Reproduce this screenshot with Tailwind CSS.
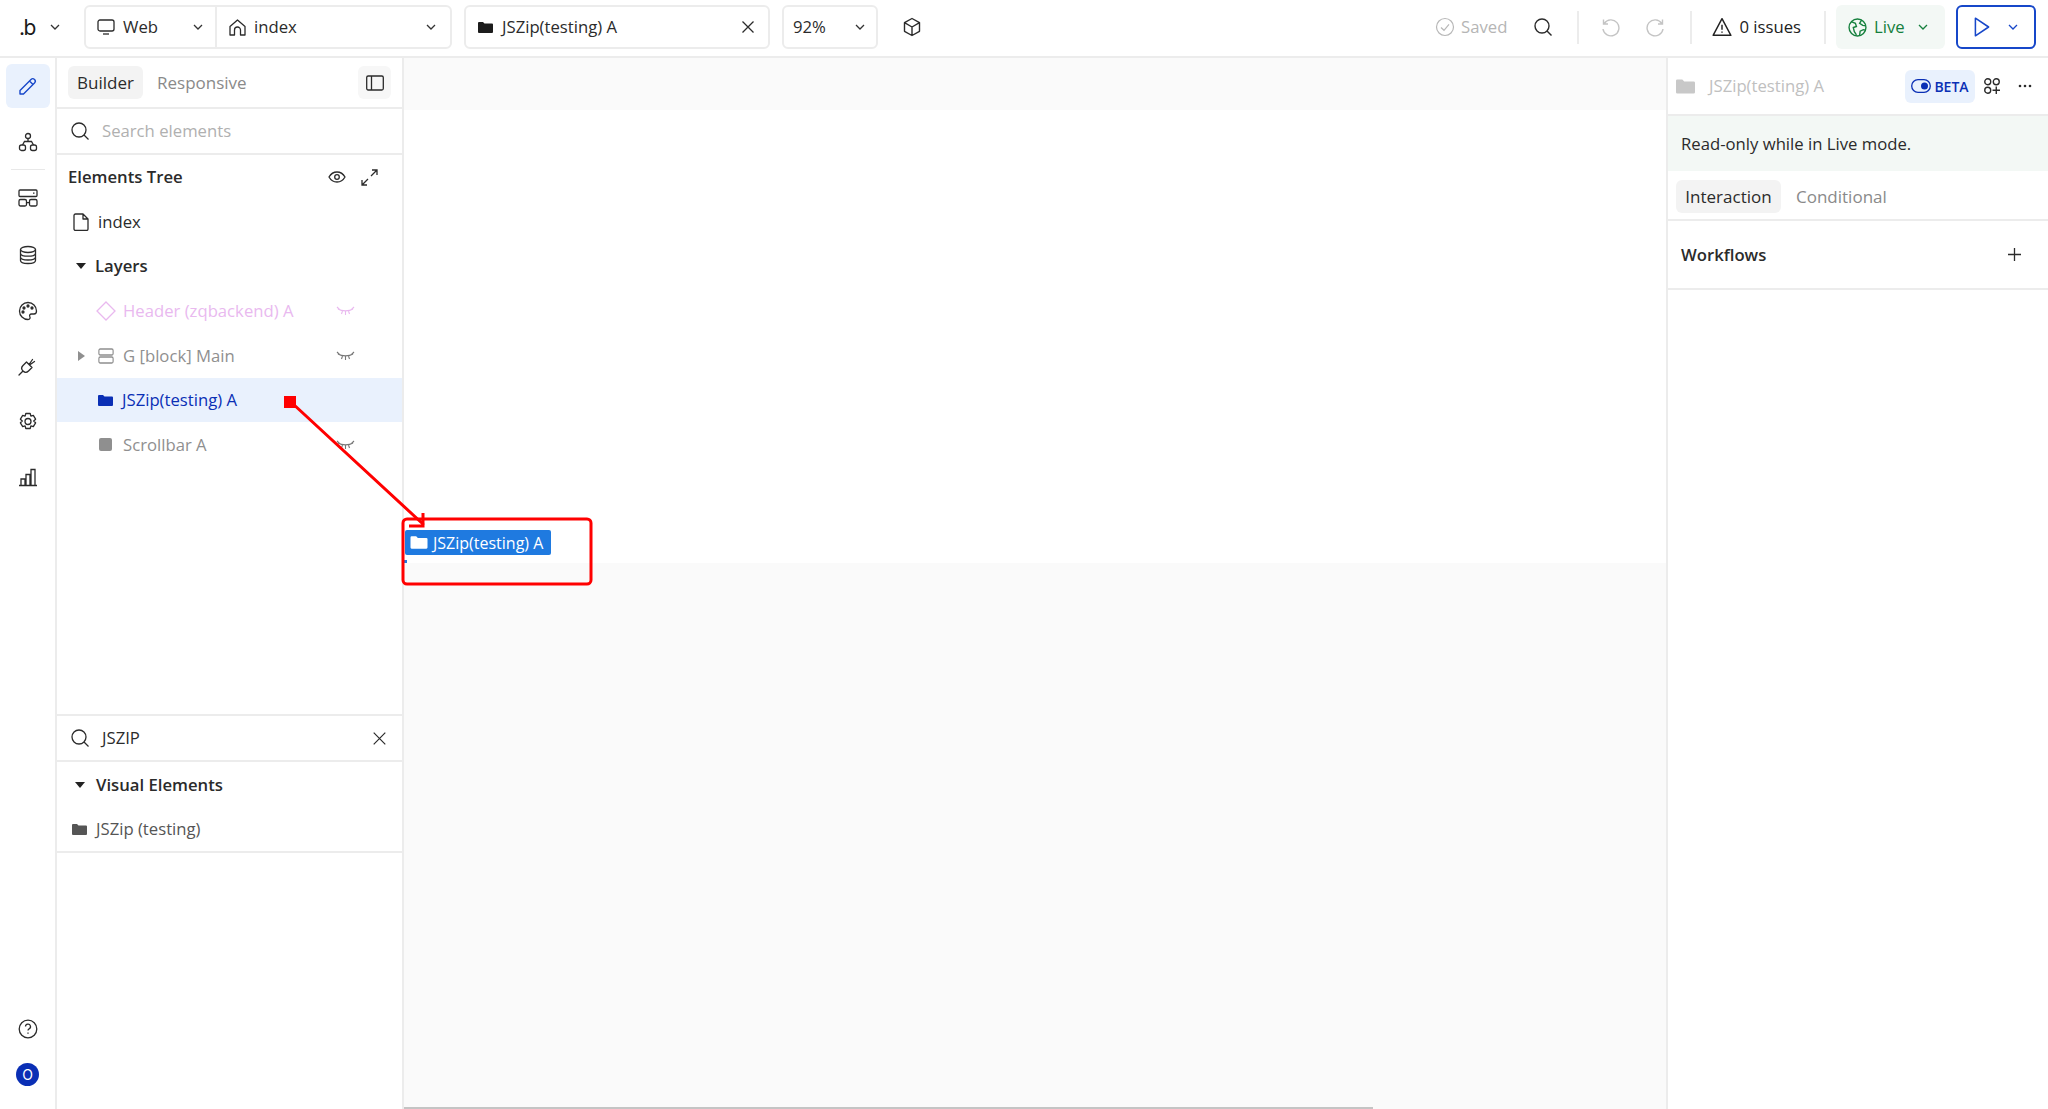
<!DOCTYPE html>
<html lang="en">
  <head>
    <meta charset="UTF-8" />
    <title>Builder</title>
    <script src="https://cdn.jsdelivr.net/npm/@tailwindcss/browser@4"></script>
  </head>
  <body class="bg-white">
    <div class="relative flex h-[1109px] w-[2048px] flex-col overflow-hidden font-['Open_Sans',sans-serif] text-[16.7px] text-[#2b2b2b]">
      <!-- Top bar -->
      <header class="flex h-[58px] shrink-0 items-center border-b-2 border-[#ececec] pb-[2px]">
        <div class="flex w-[84px] shrink-0 items-center pl-[19px]">
          <span class="w-[30px] font-['Inter',sans-serif] text-[21px] leading-none font-normal tracking-[-1.5px] text-[#1a1a1a]">.b</span>
          <svg class="h-3 w-3" viewBox="0 0 12 12" fill="none" stroke="#333" stroke-width="1.3"><path d="M2 4l4 4 4-4" /></svg>
        </div>
        <div class="flex h-[44px] w-[368px] shrink-0 items-center rounded-md border-2 border-[#ececec]">
          <div class="flex h-full w-[131px] items-center border-r-2 border-[#ececec] pl-[11px]">
            <svg class="mr-[8px] h-[18px] w-[18px]" viewBox="0 0 18 18" fill="none" stroke="#2b2b2b" stroke-width="1.3"><rect x="1" y="2" width="16" height="11" rx="2" /><path d="M6 16h6" /></svg>
            <span>Web</span>
            <svg class="ml-auto mr-[11px] h-3 w-3" viewBox="0 0 12 12" fill="none" stroke="#333" stroke-width="1.3"><path d="M2 4l4 4 4-4" /></svg>
          </div>
          <div class="flex h-full flex-1 items-center pl-[11px]">
            <svg class="mr-[7px] h-[19px] w-[19px]" viewBox="0 0 19 19" fill="none" stroke="#2b2b2b" stroke-width="1.3"><path d="M2 8.5L9.5 2 17 8.5V17h-4.5v-5a3 3 0 0 0-6 0v5H2z" stroke-linejoin="round" /></svg>
            <span>index</span>
            <svg class="ml-auto mr-[13px] h-3 w-3" viewBox="0 0 12 12" fill="none" stroke="#333" stroke-width="1.3"><path d="M2 4l4 4 4-4" /></svg>
          </div>
        </div>
        <div class="ml-[12px] flex h-[44px] w-[306px] shrink-0 items-center rounded-md border-2 border-[#ececec] pl-[12px]">
          <svg class="mr-[9px] h-[15px] w-[15px]" viewBox="0 0 15 15" fill="#1c1c1c"><path d="M0 3a1 1 0 0 1 1-1h4l1.5 1.5H14a1 1 0 0 1 1 1V12a1 1 0 0 1-1 1H1a1 1 0 0 1-1-1z" /></svg>
          <span>JSZip(testing) A</span>
          <svg class="ml-auto mr-[13px] h-[14px] w-[14px]" viewBox="0 0 14 14" fill="none" stroke="#2b2b2b" stroke-width="1.3"><path d="M1.5 1.5l11 11M12.5 1.5l-11 11" /></svg>
        </div>
        <div class="ml-[12px] flex h-[44px] w-[96px] shrink-0 items-center rounded-md border-2 border-[#ececec] pl-[9px]">
          <span>92%</span>
          <svg class="ml-auto mr-[10px] h-3 w-3" viewBox="0 0 12 12" fill="none" stroke="#333" stroke-width="1.3"><path d="M2 4l4 4 4-4" /></svg>
        </div>
        <svg class="ml-[24px] h-5 w-5 shrink-0" viewBox="0 0 20 20" fill="none" stroke="#2b2b2b" stroke-width="1.4" stroke-linejoin="round"><path d="M10 1.5l7.5 4.2v8.6L10 18.5l-7.5-4.2V5.700zM2.500 5.700L10 10l7.500-4.300M10 10v8.500" /></svg>

        <div class="ml-auto flex items-center text-[#b5b5b5]">
          <svg class="mr-[6px] h-5 w-5" viewBox="0 0 20 20" fill="none" stroke="#b8b8b8" stroke-width="1.2"><circle cx="10" cy="10" r="8.500" /><path d="M6 10.500l3 2.800 5-6" /></svg>
          <span>Saved</span>
        </div>
        <svg class="ml-[26px] h-[20px] w-[20px] shrink-0" viewBox="0 0 20 20" fill="none" stroke="#2b2b2b" stroke-width="1.4"><circle cx="9" cy="9" r="7" /><path d="M14 14l4.500 4.500" /></svg>
        <div class="ml-[24px] h-[33px] w-[2px] bg-[#ececec]"></div>
        <svg class="ml-[21px] h-5 w-5 shrink-0" viewBox="0 0 20 20" fill="none" stroke="#c4c4c4" stroke-width="1.4"><path d="M4.200 6.500A8 8 0 1 1 3 12M3.500 2.500v4.500h4.500" /></svg>
        <svg class="ml-[26px] h-5 w-5 shrink-0" viewBox="0 0 20 20" fill="none" stroke="#c4c4c4" stroke-width="1.4"><path d="M15.800 6.500A8 8 0 1 0 17 12M16.500 2.500v4.500H12" /></svg>
        <div class="ml-[24px] h-[33px] w-[2px] bg-[#ececec]"></div>
        <svg class="ml-[20px] h-[20px] w-[20px] shrink-0" viewBox="0 0 18 18" fill="none" stroke="#222" stroke-width="1.3" stroke-linejoin="round"><path d="M9 1.500L17 16.500H1z" /><path d="M9 7v4.500M9 13v1.200" /></svg>
        <span class="ml-[7px] font-medium text-[#222]">0 issues</span>
        <div class="ml-[23px] h-[33px] w-[2px] bg-[#ececec]"></div>
        <div class="ml-[10px] flex h-[44px] w-[109px] items-center rounded-md bg-[#f3f8f5] pl-[12px] text-[#15803d]">
          <svg class="mr-[7px] h-[19px] w-[19px]" viewBox="0 0 18 18" fill="none" stroke="#15803d" stroke-width="1.300"><circle cx="9" cy="9" r="8" /><path d="M3 3.500l4 1.500 1 3-3 1 1 4 2 3M13 1.800L11 5l3 2 3 .5M11 16.500l.5-4 3-1.500 2 .5" /></svg>
          <span>Live</span>
          <svg class="ml-[12px] h-3 w-3" viewBox="0 0 12 12" fill="none" stroke="#15803d" stroke-width="1.300"><path d="M2 4l4 4 4-4" /></svg>
        </div>
        <div class="ml-[11px] mr-[12px] flex h-[44px] w-[80px] items-center rounded-md border-2 border-[#1747c9] pl-[15px]">
          <svg class="h-[22px] w-[18px]" viewBox="0 0 16 20" fill="none" stroke="#1747c9" stroke-width="1.400" stroke-linejoin="round"><path d="M2 2l12 8-12 8z" /></svg>
          <svg class="ml-[16px] h-3 w-3" viewBox="0 0 12 12" fill="none" stroke="#1747c9" stroke-width="1.300"><path d="M2 4l4 4 4-4" /></svg>
        </div>
      </header>

      <div class="flex min-h-0 flex-1">
        <!-- Icon rail -->
        <nav class="flex w-[57px] shrink-0 flex-col items-center border-r-2 border-[#ececec] pt-[6px]">
          <div class="flex h-[44px] w-[44px] items-center justify-center rounded-md bg-[#e9f1fd]">
            <svg class="h-[20px] w-[20px]" viewBox="0 0 20 20" fill="none" stroke="#1747c9" stroke-width="1.400" stroke-linejoin="round"><path d="M2 14.500L13 3.500a2 2 0 0 1 3.500 3.500L5.500 18H2zM11.500 5l3.500 3.500" /></svg>
          </div>
          <svg class="mt-[24px] h-[20px] w-[20px]" viewBox="0 0 20 20" fill="none" stroke="#2b2b2b" stroke-width="1.300"><circle cx="10" cy="4" r="2.500" /><rect x="1.500" y="13" width="6" height="5.500" rx="2" /><rect x="12.500" y="13" width="6" height="5.500" rx="2" /><path d="M10 6.500v3M4.500 13l2-3.500h7l2 3.500" /></svg>
          <div class="mt-[17px] h-[1px] w-[34px] bg-[#e8e8e8]"></div>
          <svg class="mt-[18px] h-[20px] w-[20px]" viewBox="0 0 20 20" fill="none" stroke="#2b2b2b" stroke-width="1.300"><rect x="1" y="2" width="18" height="6.500" rx="1" /><rect x="1" y="11.500" width="7.500" height="6.500" rx="1.500" /><rect x="11.500" y="11.500" width="7.500" height="6.500" rx="1.500" /><path d="M8.500 14.700h3M15 5.200h1.500" /></svg>
          <svg class="mt-[37px] h-[20px] w-[20px]" viewBox="0 0 20 20" fill="none" stroke="#2b2b2b" stroke-width="1.300"><ellipse cx="10" cy="4.500" rx="7.500" ry="3" /><path d="M2.500 4.500v11c0 1.700 3.400 3 7.500 3s7.500-1.300 7.500-3v-11M2.500 8.200c0 1.700 3.400 3 7.500 3s7.500-1.300 7.500-3M2.500 12c0 1.700 3.400 3 7.500 3s7.500-1.300 7.500-3" /></svg>
          <svg class="mt-[36px] h-[20px] w-[20px]" viewBox="0 0 20 20" fill="none" stroke="#2b2b2b" stroke-width="1.300"><path d="M10 1.500a8.500 8.500 0 1 0 0 17c2 0 2.500-1.500 1.800-3-.6-1.400.3-2.500 1.700-2.500h2.500c1.500 0 2.500-1.200 2.500-3 0-4.800-3.800-8.500-8.500-8.500z" /><circle cx="6" cy="7" r="1" fill="#2b2b2b" /><circle cx="10" cy="5" r="1" fill="#2b2b2b" /><circle cx="14" cy="7" r="1" fill="#2b2b2b" /><circle cx="5" cy="11" r="1" fill="#2b2b2b" /></svg>
          <svg class="mt-[35px] h-[20px] w-[20px]" viewBox="0 0 20 20" fill="none" stroke="#2b2b2b" stroke-width="1.300" stroke-linejoin="round" stroke-linecap="round"><path d="M1 19l4-4M5 15c-2-2-1.500-4 0-5.500L8.500 6 14 11.500l-3.500 3.500C9 16.500 7 17 5 15zM11 8.500l3.500-5M11.500 9l5-3.500" /></svg>
          <svg class="mt-[36px] h-[20px] w-[20px]" viewBox="0 0 20 20" fill="none" stroke="#2b2b2b" stroke-width="1.300" stroke-linejoin="round"><path d="M7.800 1.500h4.400l.7 2.600 2.400-.8 2.300 3.900-1.900 1.800 1.900 1.800-2.300 3.900-2.400-.8-.7 2.600H7.800l-.7-2.600-2.400.8L2.400 10.800l1.900-1.800L2.400 7.200l2.300-3.900 2.400.8z" /><circle cx="10" cy="9.500" r="3" /></svg>
          <svg class="mt-[35px] h-[20px] w-[20px]" viewBox="0 0 20 20" fill="none" stroke="#2b2b2b" stroke-width="1.300"><path d="M1 18.500h18M3 18v-6h4v6M8 18V7.500h4V18M13 18V2.500h4V18" /></svg>
          <svg class="mt-auto h-[20px] w-[20px]" viewBox="0 0 20 20" fill="none" stroke="#2b2b2b" stroke-width="1.300"><circle cx="10" cy="10" r="8.800" /><path d="M7.500 7.500a2.500 2.500 0 1 1 3.600 2.300c-.8.400-1.100.9-1.100 1.700M10 13.500v1.300" /></svg>
          <div class="mt-[24px] mb-[23px] flex h-[23px] w-[23px] items-center justify-center rounded-full bg-[#0a2fb5] font-['Inter',sans-serif] text-[14px] text-white">O</div>
        </nav>

        <!-- Elements panel -->
        <aside class="flex w-[347px] shrink-0 flex-col border-r-2 border-[#ececec]">
          <div class="flex h-[51px] shrink-0 items-center border-b-2 border-[#ececec] pl-[11px] text-[17px] font-medium">
            <div class="flex h-[33px] w-[75px] items-center justify-center rounded-md bg-[#f3f3f3]">Builder</div>
            <span class="ml-[14px] text-[#8a8a8a]">Responsive</span>
            <div class="ml-auto mr-[11px] flex h-[33px] w-[33px] items-center justify-center rounded-md bg-[#f7f7f7]">
              <svg class="h-[18px] w-[18px]" viewBox="0 0 18 18" fill="none" stroke="#2b2b2b" stroke-width="1.300"><rect x="0.700" y="2" width="16.600" height="14" rx="1.500" /><path d="M5.500 2v14" /></svg>
            </div>
          </div>
          <div class="flex h-[46px] shrink-0 items-center border-b-2 border-[#ececec] pl-[13px]">
            <svg class="h-[20px] w-[20px]" viewBox="0 0 20 20" fill="none" stroke="#2b2b2b" stroke-width="1.300"><circle cx="9" cy="9" r="7" /><path d="M14 14l4.500 4.500" /></svg>
            <span class="ml-[12px] text-[#b0b0b0]">Search elements</span>
          </div>
          <div class="flex h-[44px] shrink-0 items-center pl-[11px]">
            <span class="font-semibold">Elements Tree</span>
            <svg class="ml-auto h-[18px] w-[18px]" viewBox="0 0 18 18" fill="none" stroke="#2b2b2b" stroke-width="1.300"><path d="M1 9c2-3.500 4.800-5 8-5s6 1.500 8 5c-2 3.500-4.800 5-8 5s-6-1.500-8-5z" /><circle cx="9" cy="9" r="2.300" /></svg>
            <svg class="ml-[15px] mr-[24px] h-[17px] w-[17px]" viewBox="0 0 17 17" fill="none" stroke="#2b2b2b" stroke-width="1.300"><path d="M10 7l6-6M11 1h5v5M7 10l-6 6M1 11v5h5" /></svg>
          </div>
          <div class="flex h-[45px] shrink-0 items-center pl-[16px]">
            <svg class="h-[18px] w-[16px]" viewBox="0 0 16 18" fill="none" stroke="#2b2b2b" stroke-width="1.300" stroke-linejoin="round"><path d="M1 2.500A1.500 1.500 0 0 1 2.500 1H10l5 5v10a1.500 1.500 0 0 1-1.500 1.500h-11A1.500 1.500 0 0 1 1 16zM10 1v5h5" /></svg>
            <span class="ml-[9px]">index</span>
          </div>
          <div class="flex h-[44px] shrink-0 items-center pl-[19px]">
            <svg class="h-[8px] w-[10px]" viewBox="0 0 10 8" fill="#222"><path d="M0 1h10L5 7z" /></svg>
            <span class="ml-[9px] font-semibold">Layers</span>
          </div>
          <div class="flex h-[45px] shrink-0 items-center pl-[39px] text-[#e9b9ef]">
            <svg class="h-[20px] w-[20px]" viewBox="0 0 20 20" fill="none" stroke="#e9b9ef" stroke-width="1.300"><path d="M10 1l9 9-9 9-9-9z" /></svg>
            <span class="ml-[7px]">Header (zqbackend) A</span>
            <svg class="ml-auto mr-[47px] h-[10px] w-[19px]" viewBox="0 0 19 10" fill="none" stroke="#e9b9ef" stroke-width="1.100"><path d="M2 3c4 2.500 11 2.500 15 0M1 1l2.500 2.500M18 1l-2.500 2.500M6.500 5L5.500 8M12.500 5l1 3M9.500 5.500V9" /></svg>
          </div>
          <div class="flex h-[45px] shrink-0 items-center pl-[21px] text-[#8f8f8f]">
            <svg class="h-[10px] w-[7px]" viewBox="0 0 7 10" fill="#8f8f8f"><path d="M0 0l7 5-7 5z" /></svg>
            <svg class="ml-[13px] h-[16px] w-[16px]" viewBox="0 0 18 16" preserveAspectRatio="none" fill="none" stroke="#8f8f8f" stroke-width="1.300"><rect x="1" y="1" width="16" height="6" rx="1.500" /><rect x="1" y="9" width="16" height="6" rx="1.500" /></svg>
            <span class="ml-[9px]">G [block] Main</span>
            <svg class="ml-auto mr-[47px] h-[10px] w-[19px]" viewBox="0 0 19 10" fill="none" stroke="#777" stroke-width="1.100"><path d="M2 3c4 2.500 11 2.500 15 0M1 1l2.500 2.500M18 1l-2.500 2.500M6.500 5L5.500 8M12.500 5l1 3M9.500 5.500V9" /></svg>
          </div>
          <div class="flex h-[44px] shrink-0 items-center bg-[#e9f1fd] pl-[41px] text-[#0a2fb5]">
            <svg class="h-[15px] w-[15px]" viewBox="0 0 15 15" fill="#0a2fb5"><path d="M0 3a1 1 0 0 1 1-1h4l1.500 1.500H14a1 1 0 0 1 1 1V12a1 1 0 0 1-1 1H1a1 1 0 0 1-1-1z" /></svg>
            <span class="ml-[9px]">JSZip(testing) A</span>
          </div>
          <div class="flex h-[45px] shrink-0 items-center pl-[42px] text-[#8f8f8f]">
            <div class="h-[13px] w-[13px] rounded-[2px] bg-[#8f8f8f]"></div>
            <span class="ml-[11px]">Scrollbar A</span>
            <svg class="ml-auto mr-[47px] h-[10px] w-[19px]" viewBox="0 0 19 10" fill="none" stroke="#777" stroke-width="1.100"><path d="M2 3c4 2.500 11 2.500 15 0M1 1l2.500 2.500M18 1l-2.500 2.500M6.500 5L5.500 8M12.500 5l1 3M9.500 5.500V9" /></svg>
          </div>
          <div class="h-[249px] shrink-0 border-b-2 border-[#ececec]"></div>
          <div class="flex h-[46px] shrink-0 items-center border-b-2 border-[#ececec] pl-[13px]">
            <svg class="h-[20px] w-[20px]" viewBox="0 0 20 20" fill="none" stroke="#2b2b2b" stroke-width="1.300"><circle cx="9" cy="9" r="7" /><path d="M14 14l4.500 4.500" /></svg>
            <span class="ml-[12px]">JSZIP</span>
            <svg class="ml-auto mr-[16px] h-[13px] w-[13px]" viewBox="0 0 13 13" fill="none" stroke="#2b2b2b" stroke-width="1.200"><path d="M.7.7l11.600 11.600M12.300.7L.7 12.300" /></svg>
          </div>
          <div class="flex h-[45px] shrink-0 items-center pl-[18px]">
            <svg class="h-[8px] w-[10px]" viewBox="0 0 10 8" fill="#222"><path d="M0 1h10L5 7z" /></svg>
            <span class="ml-[11px] font-semibold">Visual Elements</span>
          </div>
          <div class="flex h-[46px] shrink-0 items-center border-b-2 border-[#ececec] pl-[15px] text-[#555]">
            <svg class="h-[15px] w-[15px]" viewBox="0 0 15 15" fill="#555"><path d="M0 3a1 1 0 0 1 1-1h4l1.500 1.500H14a1 1 0 0 1 1 1V12a1 1 0 0 1-1 1H1a1 1 0 0 1-1-1z" /></svg>
            <span class="ml-[9px]">JSZip (testing)</span>
          </div>
        </aside>

        <!-- Canvas -->
        <main class="relative flex min-w-0 flex-1 flex-col bg-[#fafafa]">
          <div class="h-[52px] shrink-0"></div>
          <div class="h-[453px] shrink-0 bg-white"></div>
          <div class="absolute bottom-0 left-0 h-[2px] w-[969px] bg-[#c4c4c4]"></div>
          <div class="absolute left-[1px] top-[472px] flex h-[25px] w-[146px] items-center rounded-[2px] bg-[#1f7ae0] pl-[5px] text-[16px] font-medium text-white">
            <svg class="h-[17px] w-[18px]" viewBox="0 0 15 15" fill="#fff"><path d="M0 3a1 1 0 0 1 1-1h4l1.500 1.500H14a1 1 0 0 1 1 1V12a1 1 0 0 1-1 1H1a1 1 0 0 1-1-1z" /></svg>
            <span class="ml-[5px]">JSZip(testing) A</span>
          </div>
          <div class="absolute left-0 top-[502px] h-[3px] w-[3px] bg-[#1f7ae0]"></div>
        </main>

        <!-- Properties panel -->
        <aside class="flex w-[382px] shrink-0 flex-col border-l-2 border-[#ececec]">
          <div class="flex h-[58px] shrink-0 items-center border-b-2 border-[#ececec] pl-[8px]">
            <svg class="h-[19px] w-[19px]" viewBox="0 0 15 15" fill="#c8c8c8"><path d="M0 3a1 1 0 0 1 1-1h4l1.500 1.500H14a1 1 0 0 1 1 1V12a1 1 0 0 1-1 1H1a1 1 0 0 1-1-1z" /></svg>
            <span class="ml-[14px] text-[#c0c0c0]">JSZip(testing) A</span>
            <div class="ml-auto flex h-[33px] w-[70px] items-center justify-center gap-[3px] rounded-md bg-[#e9f1fd] text-[14px] font-semibold text-[#0a2fb5]">
              <svg class="h-[14px] w-[20px]" viewBox="0 0 20 14" fill="none" stroke="#0a2fb5" stroke-width="1.300"><rect x="0.700" y="0.700" width="18.600" height="12.600" rx="6.300" /><circle cx="13.500" cy="7" r="3.500" fill="#0a2fb5" stroke="none" /></svg>
              <span>BETA</span>
            </div>
            <svg class="ml-[9px] h-[16px] w-[16px]" viewBox="0 0 15 15" fill="none" stroke="#2b2b2b" stroke-width="1.300"><circle cx="3.500" cy="3.500" r="2.800" /><circle cx="11.500" cy="3.500" r="2.800" /><circle cx="3.500" cy="11.500" r="2.800" /><path d="M11.500 8v7M8 11.500h7" /></svg>
            <svg class="ml-[18px] mr-[16px] h-[4px] w-[14px]" viewBox="0 0 14 4" fill="#2b2b2b"><circle cx="2" cy="2" r="1.300" /><circle cx="7" cy="2" r="1.300" /><circle cx="12" cy="2" r="1.300" /></svg>
          </div>
          <div class="flex h-[55px] shrink-0 items-center bg-[#f3f8f5] pl-[13px]">Read-only while in Live mode.</div>
          <div class="flex h-[50px] shrink-0 items-start border-b-2 border-[#ececec] pl-[8px] pt-[9px] text-[17px] font-medium">
            <div class="flex h-[33px] w-[105px] items-center justify-center rounded-md bg-[#f3f3f3]">Interaction</div>
            <span class="ml-[15px] mt-[4px] text-[#8a8a8a]">Conditional</span>
          </div>
          <div class="flex h-[69px] shrink-0 items-center border-b-2 border-[#ececec] pl-[13px]">
            <span class="font-semibold">Workflows</span>
            <svg class="ml-auto mr-[27px] h-[13px] w-[13px]" viewBox="0 0 13 13" fill="none" stroke="#2b2b2b" stroke-width="1.300"><path d="M6.500 0v13M0 6.500h13" /></svg>
          </div>
        </aside>
      </div>

      <!-- Red annotation over the page -->
      <svg class="pointer-events-none absolute inset-0 h-[1109px] w-[2048px]" viewBox="0 0 2048 1109" fill="none">
        <rect x="284" y="396" width="12" height="12" fill="#ff0000" />
        <path d="M292 403L424 525M423 513v13h-14" stroke="#ff0000" stroke-width="3" />
        <rect x="403" y="519" width="188" height="65" rx="4" stroke="#ff0000" stroke-width="3" />
      </svg>
    </div>
  </body>
</html>
